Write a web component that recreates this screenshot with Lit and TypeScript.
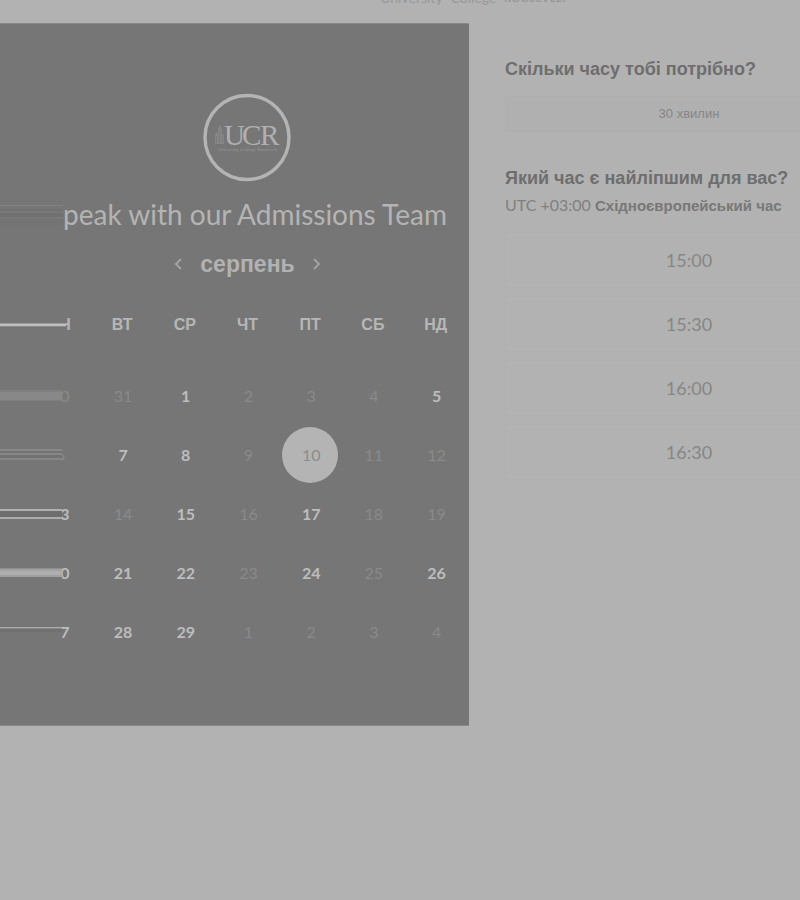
import { LitElement, html, css } from "lit";
import { customElement, state } from "lit/decorators.js";
import { classMap } from "lit/directives/class-map.js";

interface Day {
  label: string;
  open: boolean;
}

const day = (label: string, open = false): Day => ({ label, open });

const WEEKDAYS = ["ПН", "ВТ", "СР", "ЧТ", "ПТ", "СБ", "НД"];

const WEEKS: Day[][] = [
  [day("30"), day("31"), day("1", true), day("2"), day("3"), day("4"), day("5", true)],
  [day("6"), day("7", true), day("8", true), day("9"), day("10", true), day("11"), day("12")],
  [day("13", true), day("14"), day("15", true), day("16"), day("17", true), day("18"), day("19")],
  [day("20", true), day("21", true), day("22", true), day("23"), day("24", true), day("25"), day("26", true)],
  [day("27", true), day("28", true), day("29", true), day("1"), day("2"), day("3"), day("4")],
];

const SLOTS = ["15:00", "15:30", "16:00", "16:30"];

@customElement("booking-calendar")
export class BookingCalendar extends LitElement {
  @state() private selected = "10";

  static styles = css`
    :host {
      display: block;
      box-sizing: border-box;
      padding: 69px 0 64px;
      background: #767676;
      color: #bababa;
      font-family: Lato, "Liberation Sans", sans-serif;
      overflow: hidden;
    }
    .logo {
      display: block;
      width: 90px;
      height: 90px;
      margin: 0 auto;
      padding-left: 24px;
    }
    .heading {
      display: flex;
      align-items: center;
      height: 44px;
      margin-top: 9px;
    }
    .heading-trail {
      flex: none;
      width: 63px;
      height: 32px;
      background: linear-gradient(
        #767676 0 7px, #828282 7px 8px, #767676 8px 11px, #717171 11px 13px,
        #797979 13px 15px, #717171 15px 19px, #787878 19px 21px, #737373 21px 27px, #757575 27px
      );
    }
    h1 {
      margin: 0;
      font-size: 28px;
      font-weight: 400;
      line-height: 44px;
      white-space: nowrap;
      color: #b4b4b4;
    }
    .month {
      display: flex;
      align-items: center;
      justify-content: center;
      gap: 17px;
      height: 51px;
      padding: 4px 0 0 26px;
      box-sizing: border-box;
    }
    .month h2 {
      margin: 0;
      font: 700 23px/32px "Liberation Sans", sans-serif;
      color: #b2b2b2;
    }
    .month button {
      display: flex;
      padding: 0;
      border: 0;
      background: none;
      color: #a2a2a2;
    }
    .month svg {
      width: 10px;
      height: 14px;
    }
    .grid {
      padding: 0 2px 0 28px;
    }
    table {
      width: 100%;
      table-layout: fixed;
      border-collapse: collapse;
    }
    th,
    td {
      position: relative;
      padding: 0;
      height: 59px;
      text-align: center;
      vertical-align: middle;
    }
    th {
      height: 75px;
      padding-bottom: 4px;
      font: 700 16px/20px "Liberation Sans", sans-serif;
      color: #b6b6b6;
    }
    .day {
      width: 56px;
      height: 56px;
      padding: 0 0 0 2px;
      border: 0;
      border-radius: 50%;
      background: none;
      color: #8a8a8a;
      font: 400 16px/56px Lato, sans-serif;
      vertical-align: middle;
    }
    .day.open {
      color: #bdbdbd;
      font-weight: 700;
    }
    .day.selected {
      background: #b4b4b4;
      color: #8c8c8c;
      font-weight: 400;
    }
    .trail {
      position: absolute;
      top: 0;
      bottom: 0;
      left: -28px;
      width: 62px;
      background: #767676;
    }
    .trail::after {
      content: "";
      position: absolute;
      left: 0;
      right: 0;
      top: calc(50% - 6px);
      height: 12px;
    }
    .trail-head {
      bottom: 4px;
      width: 66px;
    }
    .trail-head::after {
      background: linear-gradient(transparent 4px, #9a9a9a 4px 5px, #c0c0c0 5px 7px, #8a8a8a 7px 8px, transparent 8px);
    }
    .trail-0::after {
      background: linear-gradient(#808080 0 2px, #888888 2px 10px, #808080 10px 11px, transparent 11px);
    }
    .trail-1::after {
      background: linear-gradient(#888888 0 2px, #727272 2px 4px, #888888 4px 6px, #727272 6px 9px, #868686 9px 11px, transparent 11px);
    }
    .trail-2::after {
      background: linear-gradient(transparent 1px, #b0b0b0 1px 3px, #6e6e6e 3px 9px, #acacac 9px 11px, transparent 11px);
    }
    .trail-3::after {
      background: linear-gradient(transparent 1px, #909090 1px 2px, #a2a2a2 2px 4px, #aeaeae 4px 8px, #a0a0a0 8px 10px, transparent 10px);
    }
    .trail-4::after {
      background: linear-gradient(transparent 1px, #aeaeae 1px 2px, #868686 2px 3px, #707070 3px 6px, transparent 6px);
    }
  `;

  render() {
    return html`
      <svg class="logo" viewBox="0 0 90 90" role="img" aria-label="UCR">
        <circle cx="45" cy="44.500" r="42" fill="none" stroke="#b4b4b4" stroke-width="3.4" />
        <path d="M13 51V41l2-2 1 2v-5l2-4 2 4v6l2-1v10z" fill="#868686" />
        <path d="M14.500 43v7M17.500 38v12M20.500 43v7" stroke="#787878" stroke-width=".7" />
        <g fill="#b0b0b0" font-family="Liberation Serif, serif" font-size="29">
          <text x="22" y="52">U</text>
          <text x="40" y="52">C</text>
          <text x="58" y="52">R</text>
        </g>
        <text x="16" y="58" fill="#999999" font-family="Liberation Serif, serif" font-size="5">University College Roosevelt</text>
      </svg>
      <div class="heading">
        <span class="heading-trail"></span>
        <h1>peak with our Admissions Team</h1>
      </div>
      <div class="month">
        <button aria-label="Попередній місяць">
          <svg viewBox="0 0 10 14" fill="none" stroke="currentColor" stroke-width="2"><path d="M8 2 3 7l5 5" /></svg>
        </button>
        <h2>серпень</h2>
        <button aria-label="Наступний місяць">
          <svg viewBox="0 0 10 14" fill="none" stroke="currentColor" stroke-width="2"><path d="m2 2 5 5-5 5" /></svg>
        </button>
      </div>
      <div class="grid">
        <table>
          <thead>
            <tr>
              ${WEEKDAYS.map(
                (name, i) => html`<th scope="col">${name}${i === 0 ? html`<span class="trail trail-head"></span>` : ""}</th>`
              )}
            </tr>
          </thead>
          <tbody>
            ${WEEKS.map(
              (week, row) => html`<tr>
                ${week.map(
                  (d, i) => html`<td>
                    <button
                      class=${classMap({ day: true, open: d.open, selected: d.label === this.selected })}
                      ?disabled=${!d.open}
                      @click=${() => (this.selected = d.label)}
                    >${d.label}</button>${i === 0 ? html`<span class="trail trail-${row}"></span>` : ""}
                  </td>`
                )}
              </tr>`
            )}
          </tbody>
        </table>
      </div>
    `;
  }
}

@customElement("booking-times")
export class BookingTimes extends LitElement {
  static styles = css`
    :host {
      display: block;
      box-sizing: border-box;
      min-width: 0;
      padding: 34px 0 0 36px;
      overflow: hidden;
      color: #6e6e6e;
      font-family: Lato, "Liberation Sans", sans-serif;
    }
    .content {
      width: calc(100% + 73px);
    }
    h2 {
      margin: 0;
      font: 700 18px/24px "Liberation Sans", sans-serif;
      white-space: nowrap;
      color: #6e6e6e;
    }
    button {
      display: block;
      box-sizing: border-box;
      width: 100%;
      padding: 0;
      border: 1px solid #b0b0b0;
      border-radius: 3px;
      background: none;
      color: #868686;
      font-family: inherit;
      text-align: center;
    }
    .duration {
      height: 36px;
      margin: 15px 0 34px;
      background: #b0b0b0;
      border-color: #aeaeae;
      font: 400 13px/34px "Liberation Sans", sans-serif;
    }
    .zone {
      margin: 3px 0 14px;
      font-size: 16px;
      line-height: 24px;
      white-space: nowrap;
      color: #808080;
    }
    .zone b {
      font: 700 15px/24px "Liberation Sans", sans-serif;
      color: #787878;
    }
    .slots {
      display: grid;
      gap: 8px;
    }
    .slot {
      height: 56px;
      font-size: 18px;
      line-height: 54px;
    }
  `;

  render() {
    return html`
      <div class="content">
        <h2>Скільки часу тобі потрібно?</h2>
        <button class="duration">30 хвилин</button>
        <h2>Який час є найліпшим для вас?</h2>
        <div class="zone">UTC +03:00 <b>Східноєвропейський час</b></div>
        <div class="slots">${SLOTS.map((t) => html`<button class="slot">${t}</button>`)}</div>
      </div>
    `;
  }
}

@customElement("app-root")
export class AppRoot extends LitElement {
  static styles = css`
    :host {
      display: block;
      min-height: 100vh;
      background: #b2b2b2;
    }
    header {
      display: flex;
      justify-content: center;
      align-items: flex-end;
      gap: 8px;
      box-sizing: border-box;
      height: 23px;
      padding: 0 0 17px 148px;
      overflow: hidden;
      color: #989898;
      font: 400 14px/16px Lato, sans-serif;
    }
    header b {
      font: italic 700 12px/16px Lato, sans-serif;
    }
    main {
      display: grid;
      grid-template-columns: minmax(0, 469fr) minmax(0, 331fr);
    }
    booking-calendar {
      border-top: 1px solid #888888;
      border-bottom: 1px solid #888888;
    }
  `;

  render() {
    return html`
      <header><span>University</span><span>College</span><b>ROOSEVELT</b></header>
      <main>
        <booking-calendar></booking-calendar>
        <booking-times></booking-times>
      </main>
    `;
  }
}
